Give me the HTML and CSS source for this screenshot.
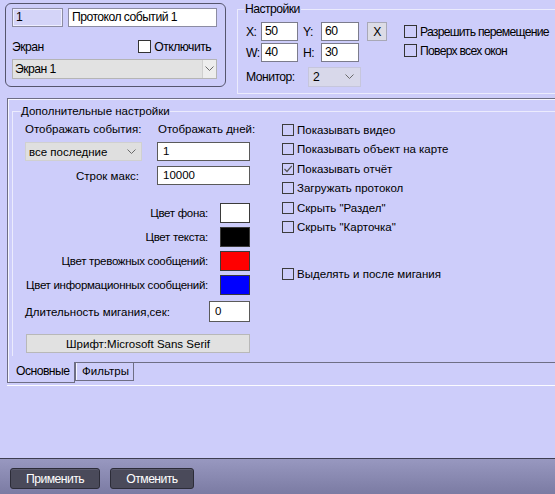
FILE: index.html
```html
<!DOCTYPE html>
<html lang="ru">
<head>
<meta charset="utf-8">
<title>Протокол событий</title>
<link rel="stylesheet" href="styles.css">
</head>
<body>
<div class="screen">
  <div class="top">
    <div class="obj narrow">
      <div class="r1">
        <div class="field id">1</div>
        <div class="field name">Протокол событий 1</div>
      </div>
      <div class="r2">
        <span>Экран</span>
        <span class="chk"><span class="box white"></span>Отключить</span>
      </div>
      <div class="select screen-sel">
        <span>Экран 1</span>
        <span class="arrow"><svg width="9" height="6" viewBox="0 0 9 6"><polyline points="0.5,0.5 4.5,4.5 8.5,0.5" fill="none" stroke="#6a6a6a" stroke-width="1"/></svg></span>
      </div>
    </div>
    <div class="gb settings narrow">
      <div class="gb-title">Настройки</div>
      <div class="settings-body">
        <div class="coords">
          <div class="crow">
            <span class="lbl lx">X:</span><span class="inp w37">50</span>
            <span class="lbl ly">Y:</span><span class="inp w38">60</span>
            <span class="xbtn">X</span>
          </div>
          <div class="crow">
            <span class="lbl lx">W:</span><span class="inp w37">40</span>
            <span class="lbl ly">H:</span><span class="inp w38">30</span>
          </div>
          <div class="crow mon">
            <span class="lbl lmon">Монитор:</span>
            <span class="monsel"><span>2</span><svg width="9" height="6" viewBox="0 0 9 6"><polyline points="0.5,0.5 4.5,4.5 8.5,0.5" fill="none" stroke="#6a6a6a" stroke-width="1"/></svg></span>
          </div>
        </div>
        <div class="checks">
          <div class="chkrow"><span class="box"></span>Разрешить перемещение</div>
          <div class="chkrow"><span class="box"></span>Поверх всех окон</div>
        </div>
      </div>
    </div>
  </div>

  <div class="page">
    <div class="gb adv">
      <div class="gb-title adv-title">Дополнительные настройки</div>
      <div class="adv-body">
        <div class="leftcol">
          <div class="grid3">
            <span>Отображать события:</span>
            <span></span>
            <span class="lbl-days">Отображать дней:</span>
            <span class="sel2"><span>все последние</span><svg width="9" height="6" viewBox="0 0 9 6"><polyline points="0.5,0.5 4.5,4.5 8.5,0.5" fill="none" stroke="#6a6a6a" stroke-width="1"/></svg></span>
            <span></span>
            <span class="inp2">1</span>
            <span class="rlabel">Строк макс:</span>
            <span></span>
            <span class="inp2">10000</span>
          </div>
          <div class="colors">
            <div class="colrow"><span>Цвет фона:</span><span class="sw white-sw"></span></div>
            <div class="colrow"><span>Цвет текста:</span><span class="sw black-sw"></span></div>
            <div class="colrow"><span>Цвет тревожных сообщений:</span><span class="sw red-sw"></span></div>
            <div class="colrow"><span>Цвет информационных сообщений:</span><span class="sw blue-sw"></span></div>
          </div>
          <div class="dur"><span>Длительность мигания,сек:</span><span class="inp2 dur-inp">0</span></div>
          <div class="font-btn">Шрифт:Microsoft Sans Serif</div>
        </div>
        <div class="rightcol">
          <div class="chk2"><span class="box2"></span>Показывать видео</div>
          <div class="chk2"><span class="box2"></span>Показывать объект на карте</div>
          <div class="chk2"><span class="box2"><svg width="10" height="10" viewBox="0 0 10 10"><polyline points="1.5,5 4,7.5 8.8,1.8" fill="none" stroke="#555" stroke-width="1.2"/></svg></span>Показывать отчёт</div>
          <div class="chk2"><span class="box2"></span>Загружать протокол</div>
          <div class="chk2"><span class="box2"></span>Скрыть "Раздел"</div>
          <div class="chk2"><span class="box2"></span>Скрыть "Карточка"</div>
          <div class="chk2 last"><span class="box2"></span>Выделять и после мигания</div>
        </div>
      </div>
    </div>
  </div>
  <div class="tabbar">
    <div class="tab active narrow">Основные</div>
    <div class="tab filters">Фильтры</div>
  </div>
  <div class="tabline"></div>
  <div class="spacer"></div>
  <div class="bottombar narrow">
    <div class="btn apply">Применить</div>
    <div class="btn cancel">Отменить</div>
  </div>
</div>
</body>
</html>
```

FILE: styles.css
```css
* { box-sizing: border-box; }
html, body { margin: 0; padding: 0; }
body {
  width: 555px;
  height: 494px;
  overflow: hidden;
  background: #cdcdfa;
  font-family: "Liberation Sans", Arial, sans-serif;
  font-size: 11.5px;
  color: #000;
  white-space: nowrap;
}
.screen { display: flex; flex-direction: column; height: 494px; }
.narrow {
  font-family: "Liberation Sans", Arial, sans-serif;
  font-size: 12.2px;
  letter-spacing: -0.55px;
}

/* ---------- top ---------- */
.top { display: flex; height: 98px; flex: none; }
.obj {
  flex: none;
  margin: 3px 0 0 5px;
  width: 221px;
  height: 84px;
  border: 1px solid #55556d;
  border-radius: 6px;
  padding: 4px 0 0 6px;
}
.r1 { display: flex; gap: 5px; height: 19px; }
.field {
  flex: none;
  height: 19px;
  border: 1px solid #8c8ca2;
  background: #fff;
  padding-left: 3px;
  line-height: 17px;
}
.field.id { width: 51px; background: #d4d4f8; box-shadow: inset 0 0 0 1px #eeeeff; }
.field.name { width: 149px; }
.r2 { display: flex; align-items: center; margin-top: 13px; height: 13px; width: 205px; }
.chk { display: flex; align-items: center; margin-left: auto; margin-right: 6px; }
.box {
  width: 13px;
  height: 13px;
  border: 1px solid #333;
  margin-right: 3px;
  flex: none;
}
.box.white { background: #fff; }
.select {
  display: flex;
  align-items: center;
  height: 20px;
  background: #e2e2e2;
  border: 1px solid #b4b4b4;
}
.screen-sel { width: 205px; margin-top: 6px; padding-left: 2px; }
.arrow {
  margin-left: auto;
  width: 14px;
  height: 18px;
  border-left: 1px solid #cfcfcf;
  background: #ededed;
  display: flex;
  align-items: center;
  justify-content: center;
}

.gb { border: 1px solid #ebebfd; }
.gb-title {
  display: table;
  margin: -8px 0 0 6px;
  padding: 0 1px;
  background: #cdcdfa;
  line-height: 15px;
}
.settings { margin: 9px 0 0 11px; flex: 1; min-width: 0; height: 85px; border-right: none; }
.settings-body { display: flex; margin-top: 5px; padding-left: 8px; }
.coords { flex: none; }
.crow { display: flex; align-items: center; height: 19px; }
.crow + .crow { margin-top: 2px; }
.crow.mon { margin-top: 5px; height: 20px; }
.crow > * { flex: none; }
.lx { width: 15px; }
.ly { width: 18px; margin-left: 5px; }
.lmon { width: 62px; }
.inp {
  height: 19px;
  background: #fff;
  border: 1px solid #7c7c8c;
  padding-left: 3px;
  line-height: 17px;
}
.w37 { width: 37px; }
.w38 { width: 38px; }
.xbtn {
  margin-left: 8px;
  width: 20px;
  height: 19px;
  background: #dcdce6;
  border: 1px solid #a8a8b6;
  display: flex;
  align-items: center;
  justify-content: center;
}
.monsel {
  width: 53px;
  height: 20px;
  background: #d8d8ea;
  border: 1px solid #c6c6dc;
  display: flex;
  align-items: center;
  justify-content: space-between;
  padding: 0 6px 0 4px;
}
.checks { margin-left: 17px; flex: none; letter-spacing: -0.75px; }
.chkrow { display: flex; align-items: center; height: 19px; }

/* ---------- page ---------- */
.page {
  flex: none;
  margin-left: 7px;
  height: 265px;
  border-top: 1px solid #6e6e84;
  border-left: 1px solid #6e6e84;
  border-bottom: 1px solid #6e6e84;
  box-shadow: inset 1px 1px 0 #f6f6ff;
}
.adv {
  margin: 12px 0 0 4px;
  height: 245px;
  border-right: none;
  border-bottom: none;
}
.adv-title { margin-left: 8px; padding: 0; }
.adv-body {
  display: grid;
  grid-template-columns: 225px 1fr;
  column-gap: 32px;
  padding-left: 12px;
  margin-top: 2px;
  align-items: start;
}
.grid3 {
  display: grid;
  grid-template-columns: 117px 15px 93px;
  grid-template-rows: 16px 19px 19px;
  row-gap: 5px;
  align-items: center;
}
.lbl-days { padding-left: 1px; }
.sel2 {
  height: 19px;
  background: #dfdfdf;
  border: 1px solid #d0d0d0;
  display: flex;
  align-items: center;
  justify-content: space-between;
  padding: 0 5px 0 3px;
}
.inp2 {
  height: 19px;
  background: #fff;
  border: 1px solid #5a5a5a;
  padding-left: 5px;
  line-height: 17px;
}
.rlabel { text-align: right; padding-right: 3px; }
.colors { margin-top: 18px; display: flex; flex-direction: column; gap: 4px; }
.colrow { display: flex; justify-content: flex-end; align-items: center; height: 20px; }
.colrow span:first-child { margin-right: 12px; letter-spacing: -0.3px; }
.sw { flex: none; width: 30px; height: 20px; border: 1px solid #3a3a3a; }
.white-sw { background: #fff; }
.black-sw { background: #000; }
.red-sw { background: #ff0000; }
.blue-sw { background: #0000ff; }
.dur { display: flex; align-items: center; margin-top: 6px; height: 21px; }
.dur-inp { flex: none; margin-left: auto; width: 41px; height: 21px; line-height: 19px; }
.font-btn {
  margin: 12px 0 0 1px;
  width: 224px;
  height: 19px;
  background: #e1e1e1;
  border: 1px solid #b8b8b8;
  display: flex;
  align-items: center;
  justify-content: center;
}
.rightcol { margin-top: -1px; }
.chk2 { display: flex; align-items: center; height: 19.5px; }
.chk2.last { margin-top: 27px; }
.box2 {
  width: 12px;
  height: 12px;
  border: 1px solid #3c3c3c;
  margin-right: 3px;
  flex: none;
  display: flex;
  align-items: center;
  justify-content: center;
}

/* ---------- tabs ---------- */
.tabbar { display: flex; margin-left: 7px; height: 20px; flex: none; align-items: flex-start; }
.tab { flex: none; }
.tab.active {
  margin-top: -1px;
  width: 68px;
  height: 21px;
  border-left: 1px solid #6e6e84;
  border-right: 1px solid #6e6e84;
  border-bottom: 1px solid #6e6e84;
  box-shadow: inset 1px 0 0 #f6f6ff;
  background: #cdcdfa;
  padding-left: 8px;
  line-height: 19px;
}
.tab.filters {
  width: 59px;
  height: 18px;
  border: 1px solid #6e6e84;
  border-top: none;
  box-shadow: inset 1px 0 0 #f6f6ff;
  padding-left: 6px;
  line-height: 16px;
}
.tabline { flex: none; margin: 2px 0 0 7px; height: 1px; background: #fbfbff; }
.spacer { flex: 1; }

/* ---------- bottom ---------- */
.bottombar {
  flex: none;
  height: 36px;
  border-top: 1px solid #3e3e52;
  background: linear-gradient(#9898c0, #7b7ba3);
  display: flex;
  gap: 10px;
  padding: 9px 0 0 10px;
}
.btn {
  flex: none;
  height: 21px;
  background: #4a4a5a;
  border: 1px solid #2c2c38;
  border-radius: 3px;
  color: #fff;
  display: flex;
  align-items: center;
  justify-content: center;
  box-shadow: inset 0 1px 0 #5c5c6e;
}
.btn.apply { width: 90px; }
.btn.cancel { width: 84px; }
```
